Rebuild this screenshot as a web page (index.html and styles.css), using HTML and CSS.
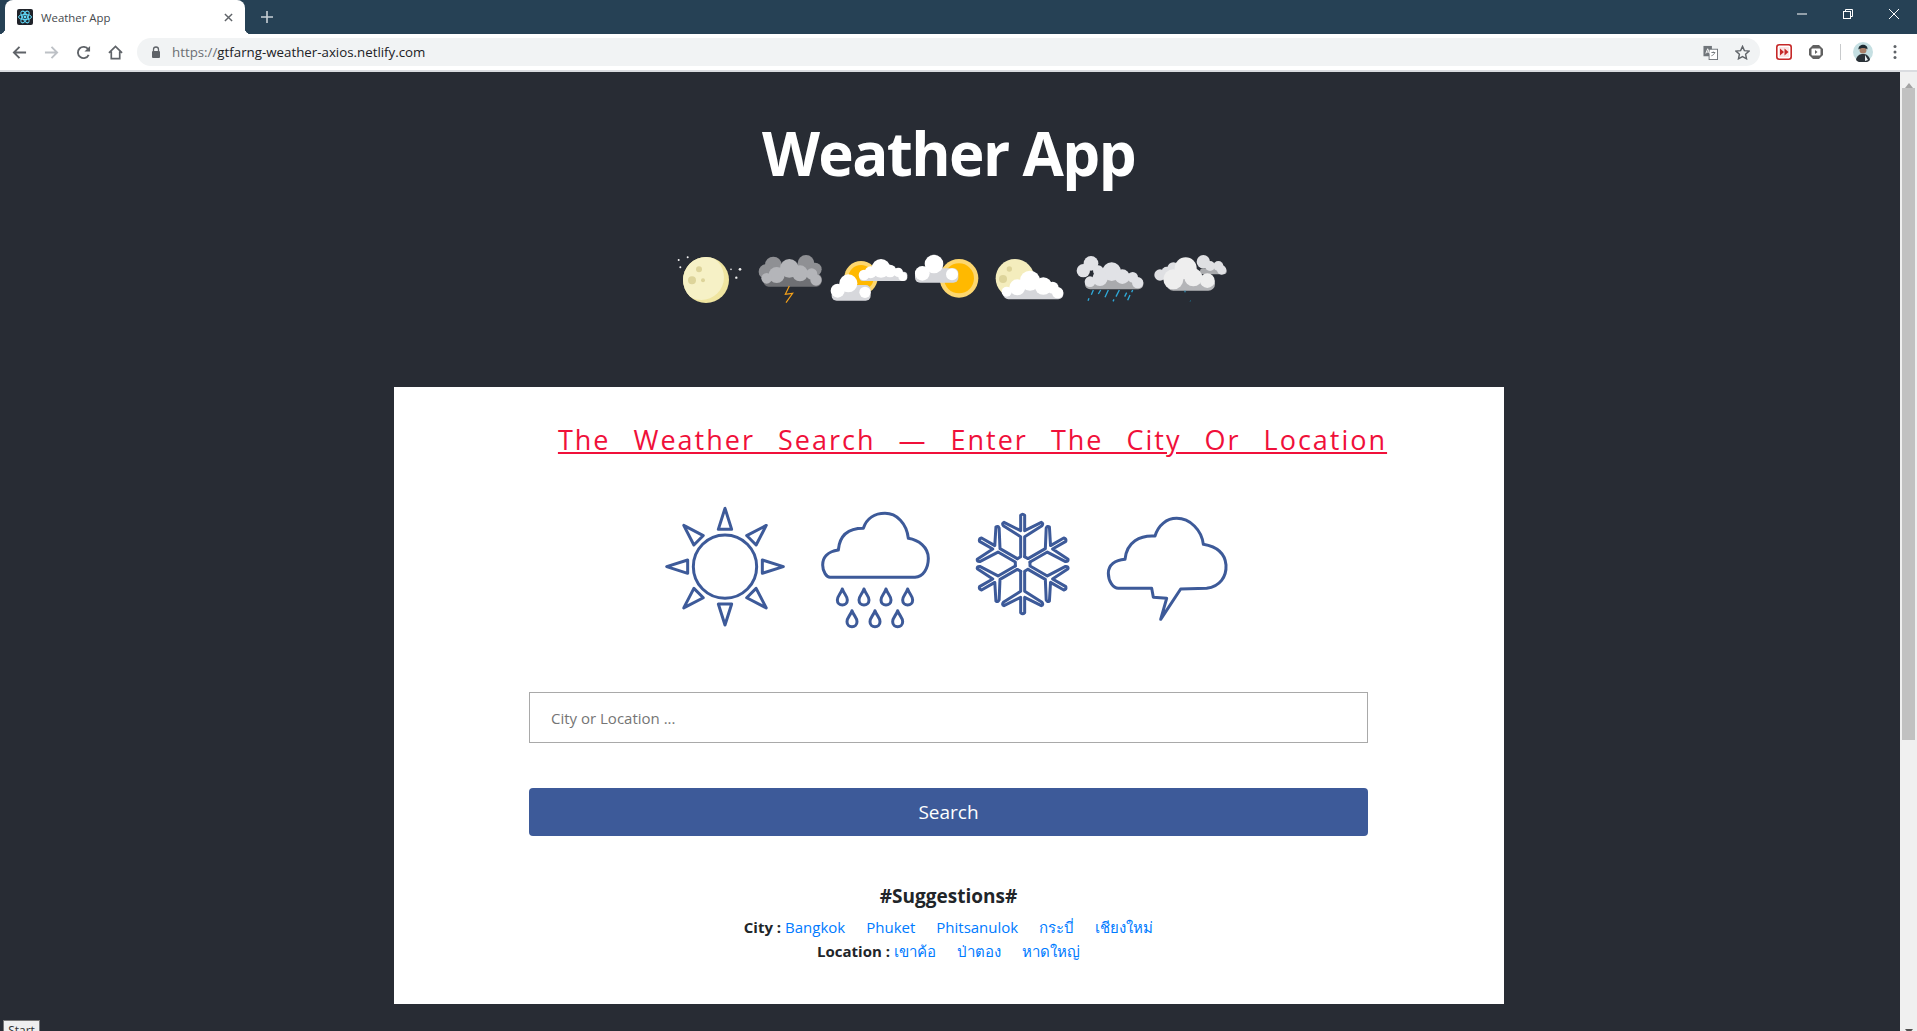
FILE: index.html
```html
<!DOCTYPE html>
<html lang="en">
<head>
  <meta charset="UTF-8">
  <title>Weather App</title>
  <link rel="stylesheet" href="styles.css">
</head>
<body>

<div class="tabstrip">
  <div class="tab">
    <svg class="favicon" viewBox="0 0 16 16">
      <rect width="16" height="16" rx="2" fill="#20232a"/>
      <g fill="none" stroke="#61dafb" stroke-width="1">
        <ellipse cx="8" cy="8" rx="6.5" ry="2.6"/>
        <ellipse cx="8" cy="8" rx="6.5" ry="2.6" transform="rotate(60 8 8)"/>
        <ellipse cx="8" cy="8" rx="6.5" ry="2.6" transform="rotate(120 8 8)"/>
      </g>
      <circle cx="8" cy="8" r="1.4" fill="#61dafb"/>
    </svg>
    <span class="tab-title">Weather App</span>
    <svg class="tab-close" viewBox="0 0 10 10"><path d="M1 1l8 8M9 1l-8 8" stroke="#5f6368" stroke-width="1.6"/></svg>
  </div>
  <svg class="new-tab" viewBox="0 0 12 12"><path d="M6 0v12M0 6h12" stroke="#c8d0d6" stroke-width="1.6"/></svg>
  <div class="win-controls">
    <svg viewBox="0 0 10 10"><path d="M0 5h10" stroke="#fff" stroke-width="1"/></svg>
    <svg viewBox="0 0 10 10" fill="none" stroke="#fff"><path d="M2.5 2V.5h7v7H8"/><rect x=".5" y="2.500" width="7" height="7"/></svg>
    <svg viewBox="0 0 10 10"><path d="M0 0l10 10M10 0L0 10" stroke="#fff" stroke-width="1"/></svg>
  </div>
</div>

<div class="toolbar">
  <svg class="nav-icon" viewBox="0 0 16 16"><path d="M15 8H2M8 2L2 8l6 6" fill="none" stroke="#5f6368" stroke-width="2"/></svg>
  <svg class="nav-icon" viewBox="0 0 16 16"><path d="M1 8h13M8 2l6 6-6 6" fill="none" stroke="#bdc1c6" stroke-width="2"/></svg>
  <svg class="nav-icon" viewBox="0 0 16 16"><path d="M13.5 10.5A6 6 0 1 1 13 4.6" fill="none" stroke="#5f6368" stroke-width="2"/><path d="M15 1v6H9z" fill="#5f6368"/></svg>
  <svg class="nav-icon" viewBox="0 0 16 16"><path d="M1 8.5L8 1.5l7 7M3.5 7v7.5h9V7" fill="none" stroke="#5f6368" stroke-width="1.8"/></svg>
  <div class="omnibox">
    <svg class="lock" viewBox="0 0 10 12"><path d="M2.500 5V3.500a2.500 2.500 0 0 1 5 0V5" fill="none" stroke="#5f6368" stroke-width="1.3"/><rect x="1" y="5" width="8" height="7" rx="1" fill="#5f6368"/></svg>
    <span class="url"><span class="scheme">https://</span>gtfarng-weather-axios.netlify.com</span>
    <svg class="omni-icon" viewBox="0 0 16 16"><rect x="0.5" y="1" width="9" height="11" fill="#70757a"/><rect x="6.5" y="4.5" width="9" height="11" fill="#fff" stroke="#70757a"/><path d="M9 8h4M11 7v1M12.500 8c-.5 2-2 3-3.500 3.500" fill="none" stroke="#70757a"/><path d="M3 9l2-5 2 5M3.800 7.500h2.400" fill="none" stroke="#fff"/></svg>
    <svg class="omni-icon" viewBox="0 0 16 16"><path d="M8 1.500l2 4.500 5 .5-3.700 3.300 1 4.900L8 12.300l-4.300 2.400 1-4.900L1 6.500 6 6z" fill="none" stroke="#5f6368" stroke-width="1.500"/></svg>
  </div>
  <svg class="ext" viewBox="0 0 16 16"><rect x=".8" y=".8" width="14.400" height="14.400" rx="2.500" fill="#fff" stroke="#c62828" stroke-width="1.600"/><rect x="3" y="3" width="10" height="10" fill="#fbe4e4"/><path d="M4 4.500L8 8l-4 3.500zM8.500 4.500L12.500 8l-4 3.500z" fill="#c62828"/></svg>
  <svg class="ext" viewBox="0 0 16 16"><path d="M5 1h6l4 4v6l-4 4H5l-4-4V5z" fill="#616161"/><rect x="3.500" y="4.500" width="9" height="7" rx="1" fill="#fff"/><path d="M7 6l2.500 2L7 10z" fill="#616161"/></svg>
  <div class="tb-sep"></div>
  <svg class="avatar" viewBox="0 0 20 20">
    <circle cx="10" cy="10" r="10" fill="#c5dfe2"/>
    <path d="M3 18c1-5 4-6 7-6s6 1 7 6a10 10 0 0 1-14 0z" fill="#2b3238"/>
    <path d="M12 13l3 5-3 1z" fill="#e8eef0"/>
    <circle cx="10" cy="8" r="3.500" fill="#a97f68"/>
    <path d="M5.500 7.500C5 1.500 15 1 14.500 7.500 12.500 5.500 8 5.500 5.500 7.500z" fill="#1d2a30"/>
  </svg>
  <svg class="menu-dots" viewBox="0 0 4 16"><circle cx="2" cy="2.500" r="1.500" fill="#5f6368"/><circle cx="2" cy="8" r="1.500" fill="#5f6368"/><circle cx="2" cy="13.500" r="1.500" fill="#5f6368"/></svg>
</div>

<div class="viewport">
  <div class="page">
    <h1 class="app-title">Weather App</h1>

    <svg class="weather-strip" viewBox="0 0 1740 240">
      <defs>
        <clipPath id="moon-clip"><circle cx="138" cy="120" r="69"/></clipPath>
      </defs>
      <!-- moon -->
      <circle cx="138" cy="120" r="69" fill="#efe5a0"/>
      <circle cx="124" cy="112" r="68" fill="#f6f1c6" clip-path="url(#moon-clip)"/>
      <circle cx="117" cy="88" r="9" fill="#ddd49a"/>
      <circle cx="96" cy="121" r="12" fill="#ddd49a"/>
      <circle cx="129" cy="121" r="6" fill="#ddd49a"/>
      <g fill="#f2f2f2">
        <circle cx="56" cy="60" r="3"/><circle cx="83" cy="52" r="3"/><circle cx="61" cy="82" r="3"/>
        <circle cx="213" cy="88" r="2.500"/><circle cx="240" cy="88" r="4"/><circle cx="229" cy="113" r="3.500"/>
      </g>
      <!-- thunder -->
      <rect x="310" y="100" width="175" height="40" rx="16" fill="#6f7074"/>
      <g fill="#8f9094">
        <circle cx="340" cy="75" r="25"/><circle cx="438" cy="70" r="25"/><circle cx="318" cy="95" r="22"/><circle cx="465" cy="88" r="20"/>
      </g>
      <g fill="#b4b5b9">
        <circle cx="388" cy="85" r="28"/><circle cx="350" cy="105" r="24"/><circle cx="420" cy="100" r="24"/><circle cx="320" cy="115" r="16"/><circle cx="455" cy="102" r="17"/><circle cx="468" cy="120" r="17"/>
      </g>
      <path d="M388 138l-12 25 22-3-20 28" fill="none" stroke="#f4a11a" stroke-width="3.500"/>
      <!-- sun behind two clouds -->
      <circle cx="603" cy="113" r="50" fill="#fdd76f"/>
      <circle cx="603" cy="113" r="38" fill="#ffb900"/>
      <rect x="598" y="95" width="144" height="28" rx="11" fill="#d7d8dc"/>
      <g fill="#fff">
        <circle cx="663" cy="85" r="28"/><circle cx="632" cy="97" r="18"/><circle cx="690" cy="93" r="19"/><circle cx="612" cy="105" r="16"/><circle cx="715" cy="97" r="14"/><circle cx="728" cy="110" r="13"/>
      </g>
      <rect x="515" y="135" width="117" height="47" rx="15" fill="#d7d8dc"/>
      <g fill="#fff">
        <circle cx="565" cy="130" r="27"/><circle cx="533" cy="152" r="21"/><circle cx="615" cy="157" r="17"/>
      </g>
      <!-- sun with cloud -->
      <circle cx="897" cy="115" r="58" fill="#fdd76f"/>
      <circle cx="897" cy="115" r="45" fill="#ffb900"/>
      <rect x="765" y="85" width="130" height="43" rx="15" fill="#d5d6da"/>
      <g fill="#fff">
        <circle cx="822" cy="72" r="28"/><circle cx="787" cy="100" r="22"/><circle cx="876" cy="103" r="18"/>
      </g>
      <g transform="translate(900 0)">
        <!-- moon with cloud -->
        <circle cx="165" cy="115" r="58" fill="#f4edbd"/>
        <circle cx="148" cy="87" r="8" fill="#ddd49a"/>
        <circle cx="129" cy="117" r="12" fill="#ddd49a"/>
        <rect x="130" y="145" width="180" height="33" rx="15" fill="#d5d6da"/>
        <g fill="#fff">
          <circle cx="210" cy="122" r="30"/><circle cx="172" cy="142" r="24"/><circle cx="250" cy="138" r="26"/><circle cx="140" cy="155" r="15"/><circle cx="278" cy="143" r="18"/><circle cx="293" cy="158" r="17"/>
        </g>
        <!-- rain -->
        <rect x="375" y="115" width="175" height="33" rx="15" fill="#a9aaad"/>
        <g fill="#e1e2e6">
          <circle cx="393" cy="70" r="22"/><circle cx="370" cy="92" r="20"/><circle cx="415" cy="92" r="16"/><circle cx="455" cy="95" r="28"/><circle cx="420" cy="115" r="23"/><circle cx="390" cy="125" r="16"/><circle cx="487" cy="110" r="22"/><circle cx="518" cy="112" r="16"/><circle cx="533" cy="128" r="17"/>
        </g>
        <path d="M400 150l-6 14M422 150l-7 12M445 150l-10 22M478 150l-10 20M500 158l-6 12M518 150l-3 7M387 175l-3 7M462 178l-3 6M510 165l-7 16" stroke="#2fa9d8" stroke-width="4"/>
        <!-- cloudy -->
        <rect x="720" y="85" width="80" height="18" rx="9" fill="#a9aaad"/>
        <g fill="#dfe0e3">
          <circle cx="730" cy="65" r="20"/><circle cx="750" cy="78" r="15"/><circle cx="775" cy="78" r="15"/><circle cx="785" cy="90" r="14"/><circle cx="640" cy="85" r="18"/><circle cx="600" cy="105" r="17"/><circle cx="620" cy="95" r="15"/>
        </g>
        <rect x="620" y="110" width="145" height="42" rx="20" fill="#b4b5b8"/>
        <g fill="#eeeeee">
          <circle cx="677" cy="85" r="33"/><circle cx="640" cy="118" r="30"/><circle cx="742" cy="122" r="22"/><circle cx="700" cy="112" r="27"/>
        </g>
        <path d="M675 152v5" stroke="#2fa9d8" stroke-width="3"/>
        <path d="M692 180l-2 6" stroke="#22556a" stroke-width="3"/>
      </g>
    </svg>

    <div class="card">
      <h3 class="card-title">The Weather Search — Enter The City Or Location</h3>

      <div class="icon-row">
        <svg viewBox="0 0 450 450" class="line-icon">
          <circle cx="225" cy="230" r="95"/>
          <path d="M225 55l-20 63h40z"/>
          <path d="M225 55l-20 63h40z" transform="rotate(45 225 230)"/>
          <path d="M225 55l-20 63h40z" transform="rotate(90 225 230)"/>
          <path d="M225 55l-20 63h40z" transform="rotate(135 225 230)"/>
          <path d="M225 55l-20 63h40z" transform="rotate(180 225 230)"/>
          <path d="M225 55l-20 63h40z" transform="rotate(225 225 230)"/>
          <path d="M225 55l-20 63h40z" transform="rotate(270 225 230)"/>
          <path d="M225 55l-20 63h40z" transform="rotate(315 225 230)"/>
        </svg>
        <svg viewBox="450 0 450 450" class="line-icon">
          <path d="M540 262H795C820 260 835 235 835 205C835 170 805 150 775 145C770 100 740 70 705 70C675 70 650 85 640 115C610 115 570 125 565 180C530 185 518 205 518 225C518 245 530 262 540 262Z"/>
          <path id="drop" d="M577 297C572 312 562 318 562 330C562 340 569 345 577 345C585 345 592 340 592 330C592 318 582 312 577 297Z"/>
          <use href="#drop" x="65"/><use href="#drop" x="131"/><use href="#drop" x="196"/>
          <use href="#drop" x="29" y="65"/><use href="#drop" x="98" y="65"/><use href="#drop" x="166" y="65"/>
        </svg>
        <svg viewBox="0 0 450 450" class="line-icon">
          <g transform="translate(218 222)">
            <path id="arm" d="M-16-16L-6-22V-82L-58-115Q-63-122-56-125L-6-100V-146Q0-152 6-146V-100L56-125Q63-122 58-115L6-82V-22"/>
            <use href="#arm" transform="rotate(60)"/>
            <use href="#arm" transform="rotate(120)"/>
            <use href="#arm" transform="rotate(180)"/>
            <use href="#arm" transform="rotate(240)"/>
            <use href="#arm" transform="rotate(300)"/>
          </g>
        </svg>
        <svg viewBox="450 0 450 450" class="line-icon">
          <path d="M505 295H605L610 322L650 325L632 388L692 297L770 295C810 290 830 260 828 225C825 190 800 170 760 163C755 120 720 85 680 85C650 85 625 105 615 138C570 135 530 155 525 208C495 210 475 225 475 250C475 275 490 295 505 295Z"/>
        </svg>
      </div>

      <input class="search-input" type="text" placeholder="City or Location ...">
      <button class="search-btn">Search</button>

      <div class="suggestions">
        <h3>#Suggestions#</h3>
        <p><b>City :</b> <a>Bangkok</a><a>Phuket</a><a>Phitsanulok</a><a>กระบี่</a><a>เชียงใหม่</a></p>
        <p><b>Location :</b> <a>เขาค้อ</a><a>ป่าตอง</a><a>หาดใหญ่</a></p>
      </div>
    </div>
  </div>

  <div class="scrollbar">
    <div class="arrow-up"></div>
    <div class="thumb"></div>
    <div class="arrow-down"></div>
  </div>

  <button class="start-btn">Start</button>
</div>

</body>
</html>
```

FILE: styles.css
```css
* {
  box-sizing: border-box;
}
html, body {
  margin: 0;
  height: 100%;
  overflow: hidden;
}
body {
  font-family: "Open Sans", "Noto Sans", sans-serif;
  display: flex;
  flex-direction: column;
  background: #282c34;
}

/* browser chrome */
.tabstrip {
  height: 34px;
  flex: none;
  display: flex;
  align-items: center;
  background: #264155;
  padding-left: 5px;
}
.tab {
  position: relative;
  width: 240px;
  height: 34px;
  display: flex;
  align-items: center;
  padding: 0 12px;
  background: #fff;
  border-radius: 8px 8px 0 0;
}
.tab::before,
.tab::after {
  content: "";
  position: absolute;
  bottom: 0;
  width: 6px;
  height: 6px;
}
.tab::before {
  left: -6px;
  background: radial-gradient(circle at 0 0, transparent 6px, #fff 6.5px);
}
.tab::after {
  right: -6px;
  background: radial-gradient(circle at 100% 0, transparent 6px, #fff 6.5px);
}
.favicon {
  width: 16px;
  height: 16px;
  margin-right: 8px;
}
.tab-title {
  font-size: 11.4px;
  color: #45494d;
  flex: 1;
}
.tab-close {
  width: 9px;
  height: 9px;
}
.new-tab {
  width: 12px;
  height: 12px;
  margin-left: 16px;
}
.win-controls {
  margin-left: auto;
  display: flex;
  gap: 36px;
  padding-right: 18px;
  margin-top: -6px;
}
.win-controls svg {
  width: 10px;
  height: 10px;
}
.toolbar {
  height: 38px;
  flex: none;
  display: flex;
  align-items: center;
  background: #fff;
  border-bottom: 2px solid #dadce0;
  padding-left: 12px;
}
.nav-icon {
  width: 15px;
  height: 15px;
  margin-right: 17px;
}
.omnibox {
  width: 1623px;
  height: 28px;
  margin-left: -3px;
  display: flex;
  align-items: center;
  background: #f1f3f4;
  border-radius: 14px;
  padding: 0 10px 0 14px;
}
.lock {
  width: 10px;
  height: 12px;
  margin-right: 11px;
}
.url {
  font-size: 13.3px;
  color: #202124;
  flex: 1;
}
.scheme {
  color: #6b6f73;
}
.omni-icon {
  width: 15px;
  height: 15px;
  margin-left: 17px;
}
.ext {
  width: 16px;
  height: 16px;
  margin-left: 16px;
}
.tb-sep {
  width: 1px;
  height: 16px;
  background: #c8cacc;
  margin: 0 12px 0 16px;
}
.avatar {
  width: 20px;
  height: 20px;
  margin-right: 20px;
}
.menu-dots {
  width: 4px;
  height: 16px;
}

/* page */
.viewport {
  position: relative;
  flex: 1;
  display: flex;
  min-height: 0;
  overflow: hidden;
}
.page {
  flex: 1;
  display: flex;
  flex-direction: column;
  align-items: center;
  padding-right: 3px;
  color: #fff;
}
.app-title {
  margin: 40px 0 0;
  font-size: 60px;
  line-height: 82px;
  font-weight: 700;
  letter-spacing: -1.6px;
}
.weather-strip {
  width: 580px;
  height: 80px;
  margin: 46px 0 0 3px;
}
.card {
  width: 1110px;
  height: 617px;
  margin-top: 67px;
  background: #fff;
  color: #212529;
  display: flex;
  flex-direction: column;
  align-items: center;
}
.card-title {
  margin: 34px 0 0 48px;
  font-size: 27px;
  font-weight: 400;
  line-height: 38px;
  color: #f0103a;
  letter-spacing: 2px;
  word-spacing: 14px;
  text-decoration: underline;
}
.icon-row {
  display: flex;
  margin: 31px 0 0 3px;
  height: 150px;
}
.line-icon {
  width: 150px;
  height: 150px;
  fill: none;
  stroke: #3d5a99;
  stroke-width: 9;
  stroke-linejoin: round;
  stroke-linecap: round;
}
.search-input {
  width: 839px;
  height: 51px;
  margin-top: 52px;
  padding: 0 21px;
  border: 1px solid #a9a9a9;
  font-family: inherit;
  font-size: 15px;
  color: #495057;
  outline: none;
}
.search-input::placeholder {
  color: #757575;
}
.search-btn {
  width: 839px;
  height: 48px;
  margin-top: 45px;
  border: none;
  border-radius: 4px;
  background: #3d5a99;
  color: #fff;
  font-family: inherit;
  font-size: 19px;
}
.suggestions {
  margin-top: 46px;
  text-align: center;
  font-size: 15px;
}
.suggestions h3 {
  margin: 0 0 5px;
  font-size: 19px;
  font-weight: 700;
  line-height: 28px;
}
.suggestions p {
  margin: 0;
  line-height: 24px;
}
.suggestions b {
  font-weight: 700;
}
.suggestions a {
  color: #007bff;
  margin-right: 21px;
}
.suggestions a:last-child {
  margin-right: 0;
}

/* fake scrollbar */
.scrollbar {
  width: 17px;
  flex: none;
  display: flex;
  flex-direction: column;
  align-items: center;
  background: #f0f0f0;
}
.arrow-up,
.arrow-down {
  width: 8px;
  flex: none;
  border-left: 4px solid transparent;
  border-right: 4px solid transparent;
}
.arrow-up {
  border-bottom: 5px solid #a3a3a3;
  height: 10px;
  margin-top: 6px;
}
.arrow-down {
  border-top: 5px solid #505050;
  height: 5px;
  margin: auto 0 -3px;
}
.thumb {
  width: 13px;
  height: 652px;
  background: #c1c1c1;
}

.start-btn {
  position: absolute;
  left: 3px;
  top: 948px;
  width: 37px;
  height: 22px;
  padding: 0;
  border: 1px solid #767676;
  background: #efefef;
  color: #333;
  font-family: "Open Sans", sans-serif;
  font-size: 12px;
  text-align: center;
  line-height: 18px;
}
```
